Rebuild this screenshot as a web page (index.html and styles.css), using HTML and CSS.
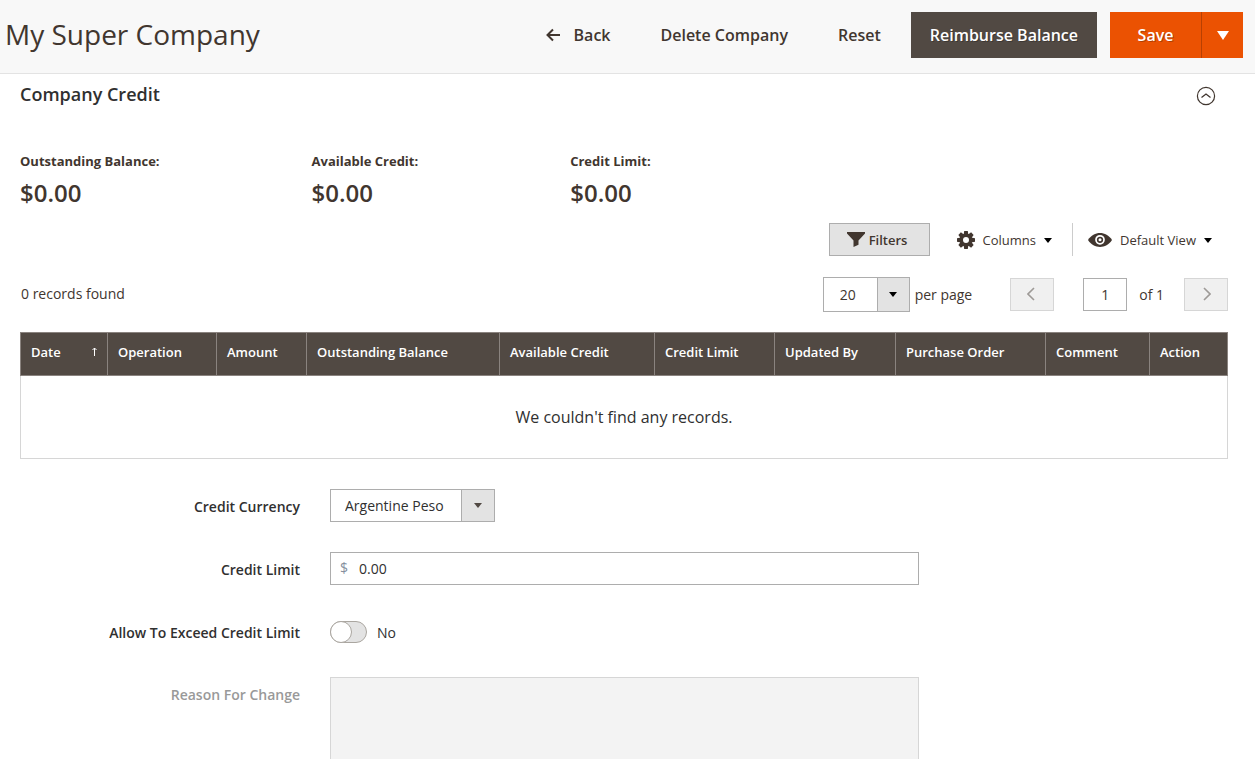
FILE: index.html
```html
<!DOCTYPE html>
<html lang="en">
<head>
<meta charset="utf-8">
<meta name="viewport" content="width=device-width, initial-scale=1">
<title>My Super Company</title>
<link rel="stylesheet" href="styles.css">
</head>
<body>
<header class="page-header">
  <h1 class="page-title">My Super Company</h1>
  <div class="page-actions">
    <button type="button" class="action action-link action-back">
      <svg width="15" height="14" viewBox="0 0 15 14" fill="none" stroke="currentColor" stroke-width="2" aria-hidden="true"><path d="M14 7H2M7 1.5 1.5 7 7 12.5"/></svg>
      Back
    </button>
    <button type="button" class="action action-link">Delete Company</button>
    <button type="button" class="action action-link">Reset</button>
    <button type="button" class="action action-dark">Reimburse Balance</button>
    <div class="save-group">
      <button type="button" class="action action-save">Save</button>
      <button type="button" class="action action-toggle" aria-label="More save options">
        <svg width="12" height="9" viewBox="0 0 12 9" fill="currentColor" aria-hidden="true"><path d="M0 0h12L6 9z"/></svg>
      </button>
    </div>
  </div>
</header>

<main class="content">
  <div class="section-head">
    <h2 class="section-title">Company Credit</h2>
    <button type="button" class="collapse" aria-label="Collapse section">
      <svg width="20" height="20" viewBox="0 0 20 20" fill="none" stroke="currentColor" aria-hidden="true"><circle cx="10" cy="10" r="8.6" stroke-width="1.2"/><path d="M5.5 11.5 10 8l4.500 3.500" stroke-width="1.300"/></svg>
    </button>
  </div>

  <dl class="summary">
    <div><dt>Outstanding Balance:</dt><dd>$0.00</dd></div>
    <div><dt>Available Credit:</dt><dd>$0.00</dd></div>
    <div><dt>Credit Limit:</dt><dd>$0.00</dd></div>
  </dl>

  <div class="grid-tools">
    <button type="button" class="filters">
      <svg width="18" height="15" viewBox="0 0 18 15" fill="currentColor" aria-hidden="true"><path d="M0 0h18v1.500L11.500 8.500v4.200L6.500 15V8.500L0 1.500z"/></svg>
      Filters
    </button>
    <button type="button" class="tool tool-columns">
      <svg width="18" height="18" viewBox="0 0 18 18" aria-hidden="true"><g fill="currentColor"><path id="tooth" d="M7.200 0h3.600l.6 4H6.600zM7.200 18h3.600l.6-4H6.600z"/><use href="#tooth" transform="rotate(45 9 9)"/><use href="#tooth" transform="rotate(90 9 9)"/><use href="#tooth" transform="rotate(135 9 9)"/></g><circle cx="9" cy="9" r="4.700" fill="none" stroke="currentColor" stroke-width="3.400"/></svg>
      Columns
      <svg class="caret" width="8" height="5" viewBox="0 0 8 5" aria-hidden="true"><path d="M0 0h8L4 5z"/></svg>
    </button>
    <button type="button" class="tool tool-view">
      <svg width="24" height="14" viewBox="0 0 24 14" aria-hidden="true"><path d="M0 7C6-2.300 18-2.300 24 7c-6 9.300-18 9.300-24 0z" fill="currentColor"/><circle cx="12" cy="6.800" r="4" fill="currentColor" stroke="#fff" stroke-width="1.700"/><circle cx="12" cy="6.800" r="1.500" fill="#fff"/></svg>
      Default View
      <svg class="caret" width="8" height="5" viewBox="0 0 8 5" aria-hidden="true"><path d="M0 0h8L4 5z"/></svg>
    </button>
  </div>

  <div class="grid-controls">
    <p class="records">0 records found</p>
    <div class="pager">
      <div class="select-box select-small">
        <select id="page-size"><option>20</option><option>30</option><option>50</option></select>
        <span class="select-cap"><svg class="caret" width="8" height="5" viewBox="0 0 8 5" aria-hidden="true"><path d="M0 0h8L4 5z"/></svg></span>
      </div>
      <label class="per-page" for="page-size">per page</label>
      <button type="button" class="page-step" disabled aria-label="Previous page">
        <svg width="8" height="14" viewBox="0 0 8 14" fill="none" stroke="currentColor" stroke-width="1.600" aria-hidden="true"><path d="M7 1 1 7l6 6"/></svg>
      </button>
      <input class="page-number" id="page-number" type="text" value="1">
      <label class="page-total" for="page-number">of 1</label>
      <button type="button" class="page-step" disabled aria-label="Next page">
        <svg width="8" height="14" viewBox="0 0 8 14" fill="none" stroke="currentColor" stroke-width="1.600" aria-hidden="true"><path d="m1 1 6 6-6 6"/></svg>
      </button>
    </div>
  </div>

  <table class="data-grid">
    <colgroup>
      <col class="col-date"><col class="col-operation"><col class="col-amount"><col class="col-balance"><col class="col-available"><col class="col-limit"><col class="col-updated"><col class="col-order"><col class="col-comment"><col class="col-action">
    </colgroup>
    <thead>
      <tr>
        <th scope="col" aria-sort="ascending"><span class="sorted">Date <svg width="5" height="9" viewBox="0 0 5 9" fill="none" stroke="currentColor" aria-hidden="true"><path d="M2.500 9V1M.5 3l2-2 2 2"/></svg></span></th>
        <th scope="col">Operation</th>
        <th scope="col">Amount</th>
        <th scope="col">Outstanding Balance</th>
        <th scope="col">Available Credit</th>
        <th scope="col">Credit Limit</th>
        <th scope="col">Updated By</th>
        <th scope="col">Purchase Order</th>
        <th scope="col">Comment</th>
        <th scope="col">Action</th>
      </tr>
    </thead>
    <tbody>
      <tr><td colspan="10">We couldn't find any records.</td></tr>
    </tbody>
  </table>

  <form class="credit-form">
    <div class="field">
      <label for="currency">Credit Currency</label>
      <div class="select-box select-currency">
        <select id="currency"><option>Argentine Peso</option></select>
        <span class="select-cap"><svg class="caret" width="8" height="5" viewBox="0 0 8 5" aria-hidden="true"><path d="M0 0h8L4 5z"/></svg></span>
      </div>
    </div>
    <div class="field">
      <label for="limit">Credit Limit</label>
      <div class="money"><span class="money-sign">$</span><input id="limit" type="text" value="0.00"></div>
    </div>
    <div class="field">
      <label for="exceed">Allow To Exceed Credit Limit</label>
      <div class="switch-row"><input class="switch" id="exceed" type="checkbox" role="switch"><span class="switch-text">No</span></div>
    </div>
    <div class="field field-disabled">
      <label for="reason">Reason For Change</label>
      <textarea class="reason" id="reason" disabled></textarea>
    </div>
  </form>
</main>
</body>
</html>
```
FILE: styles.css
```css
*,
*::before {
  box-sizing: border-box;
}

body {
  margin: 0;
  background: #fff;
  color: #41362f;
  font-family: "Open Sans", "Noto Sans", sans-serif;
  font-size: 14px;
  line-height: 20px;
}

h1,
h2,
p,
dl,
dd {
  margin: 0;
}

button,
input,
select,
textarea {
  margin: 0;
  font: inherit;
  color: inherit;
  border-radius: 0;
}

button {
  padding: 0;
  border: 0;
  background: none;
  white-space: nowrap;
}

svg {
  display: block;
  flex: none;
}

/* Header */

.page-header {
  display: flex;
  align-items: center;
  justify-content: space-between;
  padding: 12px 12px 15px 5px;
  background: #f8f8f8;
  border-bottom: 1px solid #e3e3e3;
}

.page-title {
  padding-bottom: 2px;
  font-size: 28px;
  font-weight: 400;
  line-height: 44px;
}

.page-actions {
  display: flex;
  align-items: center;
}

.action {
  height: 46px;
  font-size: 16px;
  font-weight: 600;
}

.action-link {
  padding: 0 25px;
}

.action-link:nth-child(3) {
  padding-right: 30px;
}

.action-back {
  display: flex;
  align-items: center;
  gap: 13px;
}

.action-dark {
  padding: 0 19px;
  background: #514943;
  color: #fff;
  text-shadow: 1px 1px 0 rgba(0, 0, 0, 0.25);
}

.save-group {
  display: flex;
  margin-left: 13px;
  background: #eb5202;
  color: #fff;
}

.action-save {
  width: 91px;
  text-shadow: 1px 1px 0 rgba(0, 0, 0, 0.25);
}

.action-toggle {
  display: flex;
  align-items: center;
  justify-content: center;
  width: 42px;
  border-left: 1px solid #b84002;
}

/* Section */

.content {
  padding: 0 27px 0 20px;
}

.section-head {
  display: flex;
  align-items: flex-start;
  justify-content: space-between;
  padding: 10px 12px 0 0;
}

.section-title {
  color: #303030;
  font-size: 18px;
  font-weight: 600;
  line-height: 20px;
}

.collapse {
  padding-top: 2px;
}

.summary {
  display: flex;
  gap: 152px;
  padding-top: 46px;
}

.summary dt {
  font-size: 13px;
  font-weight: 700;
  line-height: 18px;
}

.summary dd {
  padding-top: 7px;
  font-size: 24px;
  font-weight: 600;
  line-height: 32px;
}

/* Grid toolbar */

.grid-tools {
  display: flex;
  justify-content: flex-end;
  padding-top: 14px;
  font-size: 13px;
}

.filters {
  display: flex;
  align-items: center;
  justify-content: center;
  gap: 4px;
  width: 101px;
  height: 33px;
  padding-right: 4px;
  background: #e3e3e3;
  border: 1px solid #adadad;
  font-weight: 600;
}

.tool {
  display: flex;
  align-items: center;
  height: 33px;
}

.tool .caret {
  margin-top: 2px;
}

.tool-columns {
  gap: 8px;
  padding: 0 20px 0 27px;
}

.tool-view {
  gap: 8px;
  padding: 0 16px 0 15px;
  border-left: 1px solid #ccc;
}

.caret {
  fill: #000;
}

.grid-controls {
  display: flex;
  justify-content: space-between;
  padding-top: 21px;
}

.records {
  padding: 7px 0 0 1px;
}

.pager {
  display: flex;
  align-items: center;
}

.select-box {
  position: relative;
  height: 33px;
}

.select-box select {
  appearance: none;
  width: 100%;
  height: 100%;
  padding: 0 34px 0 14px;
  background: #fff;
  border: 1px solid #adadad;
}

.select-cap {
  position: absolute;
  top: 0;
  right: 0;
  bottom: 0;
  display: flex;
  align-items: center;
  justify-content: center;
  width: 34px;
  background: #e3e3e3;
  border: 1px solid #adadad;
  pointer-events: none;
}

.select-small {
  width: 87px;
  height: 35px;
}

.select-small select {
  padding-left: 16px;
}

.select-small .select-cap {
  width: 33px;
}

.per-page {
  padding: 0 38px 0 5px;
}

.page-step {
  display: flex;
  align-items: center;
  justify-content: center;
  width: 44px;
  height: 33px;
  padding: 0 2px 2px 0;
  background: #f0f0f0;
  border: 1px solid #d6d6d6;
  color: #9e9a97;
}

.page-total + .page-step {
  padding: 0 0 2px 2px;
}

.page-number {
  width: 44px;
  height: 33px;
  margin-left: 29px;
  padding: 0;
  background: #fff;
  border: 1px solid #adadad;
  text-align: center;
}

.page-total {
  padding: 0 20px 0 12px;
}

/* Data grid */

.data-grid {
  width: 100%;
  margin-top: 20px;
  border-collapse: collapse;
  table-layout: fixed;
}

.col-date { width: 87px; }
.col-operation { width: 109px; }
.col-amount { width: 90px; }
.col-balance { width: 193px; }
.col-available { width: 155px; }
.col-limit { width: 120px; }
.col-updated { width: 121px; }
.col-order { width: 150px; }
.col-comment { width: 104px; }
.col-action { width: 78px; }

.data-grid th {
  height: 43px;
  padding: 0 10px 5px;
  background: #514943;
  border: 1px solid #8a837f;
  color: #fff;
  font-size: 13px;
  font-weight: 600;
  text-align: left;
  white-space: nowrap;
}

.sorted {
  display: flex;
  align-items: center;
  justify-content: space-between;
}

.data-grid td {
  height: 83px;
  padding: 0;
  border: 1px solid #d6d6d6;
  color: #303030;
  font-size: 16px;
  text-align: center;
}

/* Form */

.credit-form {
  padding-top: 30px;
  color: #303030;
}

.field {
  display: grid;
  grid-template-columns: 280px minmax(0, 589px);
  column-gap: 30px;
  min-height: 33px;
  margin-bottom: 30px;
}

.field > label {
  padding-top: 8px;
  font-weight: 600;
  text-align: right;
}

.select-currency {
  width: 165px;
}

.select-currency .caret {
  fill: #514943;
}

.money {
  display: flex;
  height: 33px;
  border: 1px solid #adadad;
}

.money-sign {
  padding: 5px 11px 0 9px;
  color: #858f9e;
}

.money input {
  flex: 1;
  min-width: 0;
  padding: 0;
  border: 0;
  background: none;
}

.switch-row {
  display: flex;
  align-items: flex-start;
  gap: 10px;
  padding-top: 6px;
}

.switch-text {
  padding-top: 2px;
}

.switch {
  appearance: none;
  width: 37px;
  height: 22px;
  background: #e3e3e3;
  border: 1px solid #aaa6a0;
  border-radius: 11px;
}

.switch::before {
  content: "";
  display: block;
  width: 22px;
  height: 22px;
  margin: -1px;
  background: #fff;
  border: 1px solid #aaa6a0;
  border-radius: 50%;
}

.switch:checked::before {
  margin-left: 14px;
}

.field-disabled {
  margin: -1px 0 0;
}

.field-disabled > label {
  color: #999;
}

.reason {
  display: block;
  height: 82px;
  background: #f3f3f3;
  border: 1px solid #d6d6d6;
  border-bottom: 0;
  resize: none;
}
```
